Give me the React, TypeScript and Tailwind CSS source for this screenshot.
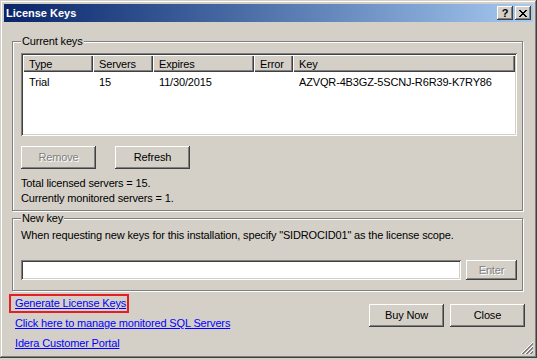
const raised =
  'shadow-[inset_-1px_-1px_0_#404040,inset_1px_1px_0_#fff,inset_-2px_-2px_0_#808080,inset_2px_2px_0_#d4d0c8]';
const sunken =
  'shadow-[inset_1px_1px_0_#808080,inset_-1px_-1px_0_#fff,inset_2px_2px_0_#404040,inset_-2px_-2px_0_#d4d0c8]';
const headerCell =
  'shadow-[inset_1px_1px_0_#fff,inset_-1px_-1px_0_#404040,inset_-2px_-2px_0_#808080]';

function Button({
  label,
  disabled,
  className = '',
}: {
  label: string;
  disabled?: boolean;
  className?: string;
}) {
  return (
    <button
      className={`h-[23px] w-[75px] bg-[#d4d0c8] flex items-center justify-center shrink-0 ${raised} ${
        disabled ? 'text-[#808080] text-shadow-[1px_1px_0_#fff]' : 'text-black'
      } ${className}`}
    >
      {label}
    </button>
  );
}

const columns = [
  { name: 'Type', w: 'w-[70px]', value: 'Trial' },
  { name: 'Servers', w: 'w-[60px]', value: '15' },
  { name: 'Expires', w: 'w-[101px]', value: '11/30/2015' },
  { name: 'Error', w: 'w-[39px]', value: '' },
  { name: 'Key', w: 'w-[222px]', value: 'AZVQR-4B3GZ-5SCNJ-R6R39-K7RY86' },
];

export default function App() {
  return (
    <div className="w-[537px] h-[360px] bg-[#d4d0c8] font-['Liberation_Sans',Arial,sans-serif] text-[11px] leading-[15px] tracking-[-0.15px] text-black">
      <div className="relative w-[537px] h-[358px] bg-[#d4d0c8] p-[4px] flex flex-col shadow-[inset_-1px_-1px_0_#404040,inset_1px_1px_0_#d4d0c8,inset_-2px_-2px_0_#808080,inset_2px_2px_0_#fff]">
        {/* title bar */}
        <div className="h-[18px] flex items-center bg-linear-to-r from-[#0a246a] to-[#a6caf0] pl-[2px] pr-[2px]">
          <span className="flex-1 font-bold text-white tracking-normal">License Keys</span>
          <div
            className={`w-[16px] h-[14px] bg-[#d4d0c8] flex items-center justify-center font-bold text-[11px] leading-none ${raised}`}
          >
            ?
          </div>
          <div
            className={`ml-[2px] w-[16px] h-[14px] bg-[#d4d0c8] flex items-center justify-center ${raised}`}
          >
            <svg width="8" height="7" viewBox="0 0 8 7" shapeRendering="crispEdges">
              <path
                d="M0 0h2v1H0zM6 0h2v1H6zM1 1h2v1H1zM5 1h2v1H5zM2 2h4v1H2zM3 3h2v1H3zM2 4h4v1H2zM1 5h2v1H1zM5 5h2v1H5zM0 6h2v1H0zM6 6h2v1H6z"
                fill="#000"
              />
            </svg>
          </div>
        </div>

        {/* current keys */}
        <fieldset className="mt-[13px] ml-[8px] w-[511px] border border-[#808080] shadow-[1px_1px_0_#fff,inset_1px_1px_0_#fff] pl-[8px] pr-[5px] pt-[5px] pb-[4px]">
          <legend className="px-[1px] leading-[13px] bg-[#d4d0c8]">Current keys</legend>
          <div className={`h-[83px] bg-white p-[2px] ${sunken}`}>
            <div className="flex h-[17px] bg-[#d4d0c8]">
              {columns.map((c) => (
                <div key={c.name} className={`${c.w} pl-[6px] pt-[1px] flex items-center ${headerCell}`}>
                  {c.name}
                </div>
              ))}
            </div>
            <div className="flex h-[18px] pt-[2px] items-center">
              {columns.map((c) => (
                <div key={c.name} className={`${c.w} pl-[6px]`}>
                  {c.value}
                </div>
              ))}
            </div>
          </div>
          <div className="mt-[10px] flex gap-[19px]">
            <Button label="Remove" disabled />
            <Button label="Refresh" />
          </div>
          <div className="mt-[7px]">
            <div>Total licensed servers = 15.</div>
            <div>Currently monitored servers = 1.</div>
          </div>
        </fieldset>

        {/* new key */}
        <fieldset className="mt-[1px] ml-[8px] w-[511px] border border-[#808080] shadow-[1px_1px_0_#fff,inset_1px_1px_0_#fff] pl-[8px] pr-[5px] pt-[3px] pb-[10px]">
          <legend className="px-[1px] leading-[13px] bg-[#d4d0c8]">New key</legend>
          <div>
            When requesting new keys for this installation, specify "SIDROCID01" as the license
            scope.
          </div>
          <div className="mt-[17px] flex gap-[5px]">
            <div className={`h-[20px] w-[440px] bg-white ${sunken}`} />
            <button
              className={`h-[20px] w-[51px] bg-[#d4d0c8] flex items-center justify-center text-[#808080] text-shadow-[1px_1px_0_#fff] ${raised}`}
            >
              Enter
            </button>
          </div>
        </fieldset>

        {/* links + buttons */}
        <div className="flex flex-1">
          <div className="ml-[5px] mt-[3px] flex flex-col items-start">
            <span className="border-2 border-[#e31e24] pl-[4px] pr-[1px]">
              <a className="text-[#0000ff] underline">Generate License Keys</a>
            </span>
            <a className="ml-[6px] leading-[20px] text-[#0000ff] underline">
              Click here to manage monitored SQL Servers
            </a>
            <a className="ml-[6px] leading-[20px] text-[#0000ff] underline">Idera Customer Portal</a>
          </div>
          <div className="ml-auto mr-[8px] mt-[13px] flex gap-[6px] items-start">
            <Button label="Buy Now" />
            <Button label="Close" />
          </div>
        </div>

        {/* resize grip */}
        <svg
          className="absolute right-[3px] bottom-[3px]"
          width="13"
          height="13"
          viewBox="0 0 13 13"
          shapeRendering="crispEdges"
        >
          {[0, 4, 8].map((o) => (
            <g key={o}>
              <line x1={12} y1={o} x2={o} y2={12} stroke="#fff" strokeWidth="1" />
              <line x1={12} y1={o + 1} x2={o + 1} y2={12} stroke="#808080" strokeWidth="1" />
              <line x1={12} y1={o + 2} x2={o + 2} y2={12} stroke="#808080" strokeWidth="1" />
            </g>
          ))}
        </svg>
      </div>
    </div>
  );
}
